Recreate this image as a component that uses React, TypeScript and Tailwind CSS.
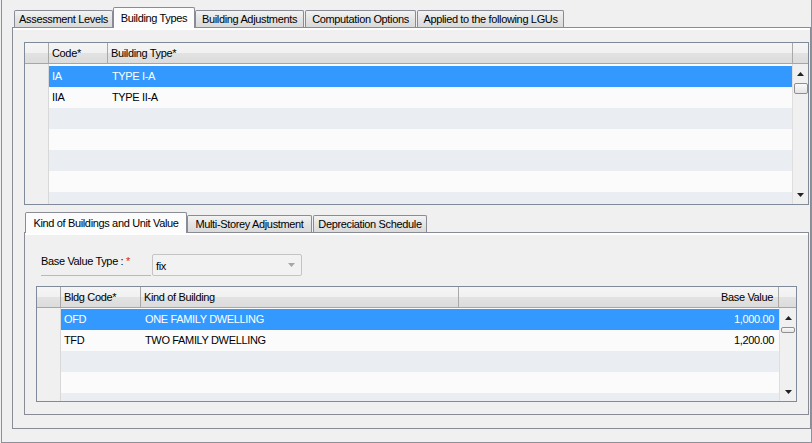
import React from "react";

type Col = { label: string; width: number; align?: "left" | "right" };

const headerBg =
  "bg-[linear-gradient(to_bottom,#f5f5f5_0%,#f1f1f1_48%,#e2e2e2_52%,#dcdcdc_100%)]";

const ArrowUp = ({ color = "#222" }: { color?: string }) => (
  <svg width="7" height="4" viewBox="0 0 7 4">
    <path d="M0 4 L3.5 0 L7 4 Z" fill={color} />
  </svg>
);

const ArrowDown = ({ color = "#222" }: { color?: string }) => (
  <svg width="7" height="4" viewBox="0 0 7 4">
    <path d="M0 0 L7 0 L3.5 4 Z" fill={color} />
  </svg>
);

const Tab = ({
  label,
  width,
  active,
  className,
}: {
  label: string;
  width: number;
  active?: boolean;
  className?: string;
}) => (
  <div
    style={{ width }}
    className={
      active
        ? "relative z-10 -mb-px flex h-[21px] shrink-0 items-center justify-center whitespace-nowrap rounded-t-[2px] border border-b-0 border-[#898c95] bg-[#fcfcfc] text-black " +
          (className ?? "")
        : "flex h-[17px] shrink-0 items-center justify-center whitespace-nowrap rounded-t-[2px] border border-b-0 border-[#898c95] bg-[linear-gradient(to_bottom,#f3f3f3,#e4e4e4_50%,#dadada)] text-black " +
          (className ?? "")
    }
  >
    {label}
  </div>
);

const ScrollCol = ({ width, thumbH }: { width: number; thumbH: number }) => (
  <div
    style={{ width }}
    className="flex shrink-0 flex-col items-center border-l border-[#dedede] bg-[#f0f0f0]"
  >
    <div className="flex h-[18px] w-full items-center justify-center pt-[1px]">
      <ArrowUp />
    </div>
    <div
      style={{ height: thumbH }}
      className="mt-[1px] w-[14px] rounded-[2px] border border-[#8f8f8f] bg-[linear-gradient(to_bottom,#fafafa,#e4e4e4)]"
    />
    <div className="flex-1" />
    <div className="flex h-[16px] w-full items-center justify-center pb-[2px]">
      <ArrowDown />
    </div>
  </div>
);

const Grid = ({
  cols,
  rows,
  height,
  scrollW,
  thumbH,
  gapTop,
}: {
  cols: Col[];
  rows: string[][];
  height: number;
  scrollW: number;
  thumbH: number;
  gapTop: number;
}) => {
  const filler = Array.from({ length: 8 - rows.length }, () => cols.map(() => ""));
  const all = [...rows, ...filler];
  return (
    <div
      style={{ height }}
      className="flex flex-col overflow-hidden border border-[#7f8b98] bg-[#fbfbfb]"
    >
      <div className={"flex h-[21px] shrink-0 border-b border-[#a3a6aa] " + headerBg}>
        <div className="w-[24px] shrink-0 border-r border-[#a9a9a9]" />
        {cols.map((c) => (
          <div
            key={c.label}
            style={{ width: c.width }}
            className={
              "flex shrink-0 items-center border-r border-[#a9a9a9] " +
              (c.align === "right" ? "justify-end pr-[5px]" : "pl-[3px]")
            }
          >
            {c.label}
          </div>
        ))}
        <div className="flex-1" />
      </div>
      <div className="flex min-h-0 flex-1">
        <div className="w-[24px] shrink-0 border-r border-[#d8d8d8] bg-[#f0f0f0]" />
        <div className="flex min-w-0 flex-1 flex-col overflow-hidden">
          <div style={{ height: gapTop }} className="shrink-0 bg-[#fbfbfb]" />
          {all.map((r, i) => (
            <div
              key={i}
              className={
                "flex h-[21px] shrink-0 items-center " +
                (i === 0
                  ? "bg-[#3399ff] text-white"
                  : i % 2 === 1
                    ? "bg-[#fbfbfb] text-black"
                    : "bg-[#eaeef2] text-black")
              }
            >
              {cols.map((c, j) => (
                <div
                  key={j}
                  style={{ width: c.width }}
                  className={
                    "shrink-0 " +
                    (c.align === "right" ? "pr-[5px] text-right" : j === 0 ? "pl-[3px]" : "pl-[4px]")
                  }
                >
                  {r[j]}
                </div>
              ))}
            </div>
          ))}
        </div>
        <ScrollCol width={scrollW} thumbH={thumbH} />
      </div>
    </div>
  );
};

export default function App() {
  return (
    <div className="h-[443px] w-[812px] overflow-hidden bg-[#f0f0f0] font-['Liberation_Sans',Arial,sans-serif] text-[11px] leading-none tracking-[-0.35px] text-black">
      <div className="ml-px flex h-[443px] w-[811px] flex-col border-b border-l border-r border-[#8e9199] pl-[10px] pt-[7px]">
        {/* top tabs */}
        <div className="flex h-[20px] items-end pl-[2px]">
          <Tab label="Assessment Levels" width={99} />
          <Tab label="Building Types" width={82} active />
          <Tab label="Building Adjustments" width={109} />
          <Tab label="Computation Options" width={111} className="ml-px" />
          <Tab label="Applied to the following LGUs" width={147} className="ml-px" />
        </div>

        <div className="h-[402px] border border-[#898c95]">
          <div className="h-full border-t-2 border-white pl-[11px] pr-px pt-[12px]">
            <Grid
              height={163}
              gapTop={2}
              scrollW={16}
              thumbH={11}
              cols={[
                { label: "Code*", width: 59 },
                { label: "Building Type*", width: 685 },
              ]}
              rows={[
                ["IA", "TYPE I-A"],
                ["IIA", "TYPE II-A"],
              ]}
            />

            {/* inner tabs */}
            <div className="mt-[7px] flex h-[20px] items-end pl-px">
              <Tab label="Kind of Buildings and Unit Value" width={162} active />
              <Tab label="Multi-Storey Adjustment" width={125} />
              <Tab label="Depreciation Schedule" width={114} className="ml-px" />
            </div>
            <div className="h-[183px] border border-[#898c95]">
              <div className="h-full border-t-2 border-white pl-[11px] pt-[19px]">
                <div className="ml-[5px] flex items-start">
                  <div className="h-[22px] w-[110px] border-b border-[#b9b9b9] pt-[2px]">
                    Base Value Type : <span className="text-[#e0202a]">*</span>
                  </div>
                  <div className="ml-px flex h-[22px] w-[150px] items-center justify-between rounded-[2px] border border-[#c4c4c4] bg-[#f2f2f2] pl-[3px] pr-[6px]">
                    <span className="pt-[2px]">fix</span>
                    <ArrowDown color="#a6a6a6" />
                  </div>
                </div>
                <div className="mt-[10px] w-[761px]">
                  <Grid
                    height={116}
                    gapTop={1}
                    scrollW={17}
                    thumbH={6}
                    cols={[
                      { label: "Bldg Code*", width: 80 },
                      { label: "Kind of Building", width: 318 },
                      { label: "Base Value", width: 320, align: "right" },
                    ]}
                    rows={[
                      ["OFD", "ONE FAMILY DWELLING", "1,000.00"],
                      ["TFD", "TWO FAMILY DWELLING", "1,200.00"],
                    ]}
                  />
                </div>
              </div>
            </div>
          </div>
        </div>
      </div>
    </div>
  );
}
